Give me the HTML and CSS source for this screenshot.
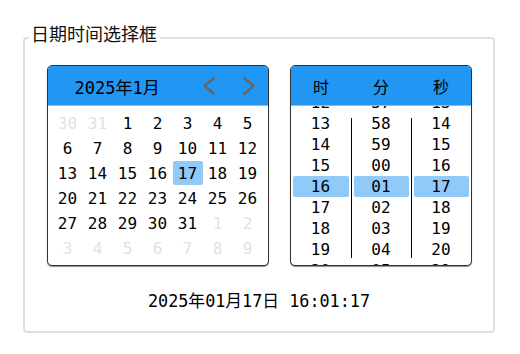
FILE: index.html
```html
<!DOCTYPE html>
<html lang="zh-CN">
<head>
    <meta charset="UTF-8">
    <meta name="viewport" content="width=device-width, initial-scale=1.0">
    <title>日期时间选择框</title>
    <link rel="stylesheet" href="styles.css">
</head>
<body>
    <fieldset class="panel">
        <legend>日期时间选择框</legend>

        <div class="pickers">
            <!-- 日历 -->
            <div class="calendar">
                <div class="cal-header">
                    <span class="cal-title">2025年1月</span>
                    <span class="arrow">
                        <svg width="14" height="20" viewBox="0 0 14 20"><path d="M12.5 1.5 L2.5 10 L12.5 18.5" fill="none" stroke="#666" stroke-width="2.4"/></svg>
                    </span>
                    <span class="arrow">
                        <svg width="14" height="20" viewBox="0 0 14 20"><path d="M1.5 1.5 L11.5 10 L1.5 18.5" fill="none" stroke="#666" stroke-width="2.4"/></svg>
                    </span>
                </div>
                <div class="days">
                    <span class="other">30</span><span class="other">31</span><span>1</span><span>2</span><span>3</span><span>4</span><span>5</span>
                    <span>6</span><span>7</span><span>8</span><span>9</span><span>10</span><span>11</span><span>12</span>
                    <span>13</span><span>14</span><span>15</span><span>16</span><span class="active">17</span><span>18</span><span>19</span>
                    <span>20</span><span>21</span><span>22</span><span>23</span><span>24</span><span>25</span><span>26</span>
                    <span>27</span><span>28</span><span>29</span><span>30</span><span>31</span><span class="other">1</span><span class="other">2</span>
                    <span class="other">3</span><span class="other">4</span><span class="other">5</span><span class="other">6</span><span class="other">7</span><span class="other">8</span><span class="other">9</span>
                </div>
            </div>

            <!-- 时间 -->
            <div class="clock">
                <div class="clock-header">
                    <span>时</span><span>分</span><span>秒</span>
                </div>
                <div class="clock-body">
                    <ul class="col">
                        <li>12</li><li>13</li><li>14</li><li>15</li><li class="active">16</li><li>17</li><li>18</li><li>19</li><li>20</li>
                    </ul>
                    <div class="divider"></div>
                    <ul class="col">
                        <li>57</li><li>58</li><li>59</li><li>00</li><li class="active">01</li><li>02</li><li>03</li><li>04</li><li>05</li>
                    </ul>
                    <div class="divider"></div>
                    <ul class="col">
                        <li>13</li><li>14</li><li>15</li><li>16</li><li class="active">17</li><li>18</li><li>19</li><li>20</li><li>21</li>
                    </ul>
                </div>
            </div>
        </div>

        <div class="result">2025年01月17日 16:01:17</div>
    </fieldset>
</body>
</html>
```

FILE: styles.css
```css
body {
    margin: 0;
    padding: 21px 25px 0 23px;
    font-family: "DejaVu Sans Mono", "Noto Sans CJK SC", monospace;
    font-size: 16px;
    color: #000;
    background: #fff;
}
.panel {
    margin: 0;
    padding: 10px 0 20px;
    border: 2px solid #d8e0e8;
    border-radius: 4px;
    min-width: 0;
}
.panel legend {
    margin-left: 4px;
    padding: 0 3px 10px 2px;
    font-family: "Noto Sans CJK SC", sans-serif;
    font-size: 18px;
    line-height: 24px;
    color: #111;
}
.pickers {
    display: flex;
    justify-content: center;
    gap: 21px;
}
.calendar,
.clock {
    height: 201px;
    box-sizing: border-box;
    border: 1px solid #333;
    border-radius: 5px;
    box-shadow: 0 1px 1px rgba(0, 0, 0, 0.45);
    overflow: hidden;
    background: #fff;
}
.calendar {
    width: 222px;
}
.cal-header {
    display: flex;
    align-items: center;
    height: 39px;
    padding: 0 12px 0 27px;
    background: #2196f3;
    border-bottom: 1px solid #7cc0f7;
}
.cal-title {
    flex: 1;
    font-size: 17px;
    padding-top: 1px;
}
.arrow {
    display: flex;
    width: 14px;
    margin-left: 26px;
}
.days {
    display: grid;
    grid-template-columns: repeat(7, 30px);
    grid-auto-rows: 24px;
    row-gap: 1px;
    padding: 5px 0 0 5px;
}
.days span {
    display: flex;
    align-items: center;
    justify-content: center;
    border-radius: 2px;
}
.days .other {
    color: #e2e2e2;
}
.days .active,
.col .active {
    background: #90caf9;
}
.clock {
    width: 182px;
}
.clock-header {
    position: relative;
    z-index: 1;
    display: flex;
    height: 39px;
    background: #2196f3;
    border-bottom: 1px solid #7cc0f7;
    font-family: "Noto Sans CJK SC", sans-serif;
}
.clock-header span {
    flex: 1;
    display: flex;
    align-items: center;
    justify-content: center;
    padding-left: 1px;
}
.clock-body {
    display: flex;
    height: 161px;
    overflow: hidden;
}
.col {
    list-style: none;
    margin: -14px 0 0;
    padding: 0;
    width: 60px;
}
.col + .divider + .col {
    width: 59px;
}
.col li {
    height: 21px;
    line-height: 21px;
    text-align: center;
    margin: 0 2px;
    border-radius: 2px;
}
.divider {
    width: 1px;
    background: #000;
    margin: 12px 0 9px;
}
.result {
    margin-top: 25px;
    font-size: 16.8px;
    line-height: 20px;
    text-align: center;
}
```
